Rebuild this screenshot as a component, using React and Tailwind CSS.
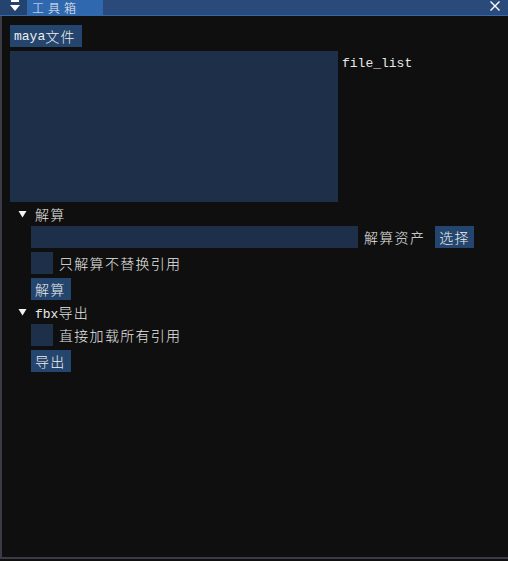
import React from "react"

const Zh = ({ children }) => (
    <span className="font-['Noto_Sans_CJK_SC',sans-serif] font-light text-[14px] tracking-[1.3px] leading-none">{children}</span>
)

const En = ({ children }) => (
    <span className="font-['Liberation_Mono',monospace] text-[13px] leading-none">{children}</span>
)

const Btn = ({ children, w }) => (
    <div className={`flex items-center h-[22px] px-[4px] bg-[#24456d] text-[#eeeeee] whitespace-nowrap ${w}`}>
        {children}
    </div>
)

const Arrow = () => (
    <svg width="9" height="8" viewBox="0 0 9 8" className="shrink-0">
        <polygon points="0.5,1 8.5,1 4.5,7.5" fill="#f2f2f2" />
    </svg>
)

const Check = ({ label }) => (
    <div className="flex items-center h-[22px] gap-[6px]">
        <div className="w-[22px] h-[22px] bg-[#1d2f49]" />
        <div className="text-[#e8e8e8]"><Zh>{label}</Zh></div>
    </div>
)

const TreeNode = ({ children }) => (
    <div className="flex items-center h-[16px] pl-[8px] gap-[8px] text-[#e8e8e8]">
        <Arrow />
        <div>{children}</div>
    </div>
)

export default function App() {
    return (
        <div className="w-[508px] h-[561px] bg-[#0f0f0f] flex flex-col overflow-hidden leading-none">
            {/* title bar */}
            <div className="flex items-stretch h-[16px] bg-[#294a7a] border-b border-[#3369ad] shrink-0">
                <div className="w-[27px] bg-[#24436f] relative">
                    <svg width="14" height="12" viewBox="0 0 14 12" className="absolute left-[8px] top-0">
                        <rect x="3" y="0" width="8" height="2" fill="#ffffff" />
                        <polygon points="2,5 12,5 7,11" fill="#ffffff" />
                    </svg>
                </div>
                <div className="w-[76px] bg-[#2f68ae] flex items-center pl-[5px] text-[#f0f0f0]">
                    <span className="font-['Noto_Sans_CJK_SC',sans-serif] font-light text-[12px] tracking-[4px] leading-[12px]">工具箱</span>
                </div>
                <div className="flex-1 flex justify-end items-start pr-[8px] pt-[1px]">
                    <svg width="10" height="10" viewBox="0 0 10 10">
                        <path d="M0.5 0.5 L9.5 9.5 M9.5 0.5 L0.5 9.5" stroke="#ffffff" strokeWidth="1.4" />
                    </svg>
                </div>
            </div>

            {/* body */}
            <div className="flex-1 flex flex-col border-l-2 border-b-2 border-[#3b3b45] pl-[8px] pt-[9px] gap-[4px] mb-[2px]">
                <Btn w="w-[72px]"><En>maya</En><Zh>文件</Zh></Btn>

                <div className="flex items-start gap-[4px]">
                    <div className="w-[328px] h-[151px] bg-[#1d2f49]" />
                    <div className="mt-[2px] text-[#e8e8e8]"><En>file_list</En></div>
                </div>

                <TreeNode><Zh>解算</Zh></TreeNode>

                <div className="flex flex-col gap-[4px] pl-[21px]">
                    <div className="flex items-center h-[22px]">
                        <div className="w-[327px] h-[22px] bg-[#1d2f49]" />
                        <div className="ml-[6px] text-[#e8e8e8]"><Zh>解算资产</Zh></div>
                        <div className="ml-[10px]"><Btn w="w-[39px]"><Zh>选择</Zh></Btn></div>
                    </div>
                    <Check label="只解算不替换引用" />
                    <div className="flex"><Btn w="w-[40px]"><Zh>解算</Zh></Btn></div>
                </div>

                <TreeNode><En>fbx</En><Zh>导出</Zh></TreeNode>

                <div className="flex flex-col gap-[4px] pl-[21px]">
                    <Check label="直接加载所有引用" />
                    <div className="flex"><Btn w="w-[40px]"><Zh>导出</Zh></Btn></div>
                </div>
            </div>
        </div>
    )
}
